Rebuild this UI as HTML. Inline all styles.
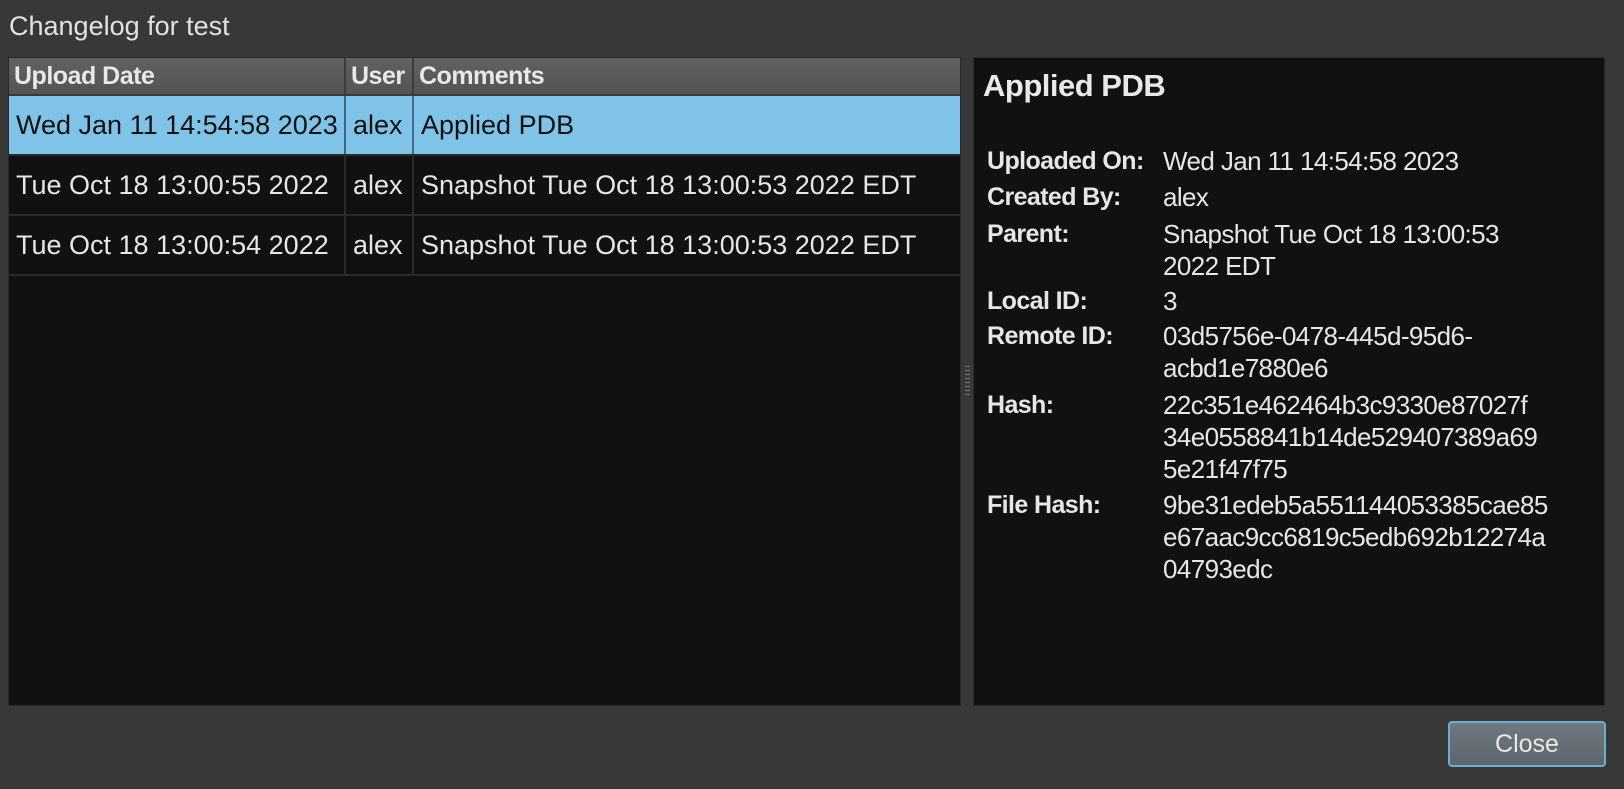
<!DOCTYPE html>
<html><head><meta charset="utf-8"><style>
*{margin:0;padding:0;box-sizing:border-box}
body{width:1624px;height:789px;background:#383838;font-family:"Liberation Sans",sans-serif;color:#e6e6e6;position:relative;overflow:hidden}
.title{position:absolute;left:9px;top:11px;font-size:27px;color:#e2e2e2}
.left{position:absolute;left:8px;top:57px;width:953px;height:649px;background:#111;border:1px solid #2a2a2a}
.hdr{position:absolute;left:0;top:0;width:100%;height:38px;background:linear-gradient(#616161,#545454);border-bottom:2px solid #3a3a3a}
.hdr div{position:absolute;top:0;height:36px;line-height:36px;font-weight:bold;font-size:25px;color:#e8e8e8;padding-left:5px;border-right:2px solid #3c3c3c;white-space:nowrap;overflow:hidden;letter-spacing:-0.5px}
.row{position:absolute;left:0;width:951px;height:60px;border-bottom:2px solid #2b2b2b}
.row div{position:absolute;top:0;height:58px;line-height:58px;font-size:27px;padding-left:7px;border-right:2px solid #2b2b2b;white-space:nowrap;letter-spacing:0}
.sel{background:#7fc4e8;color:#111}
.sel div{border-right-color:#3f6a86}
.right{position:absolute;left:973px;top:57px;width:632px;height:649px;background:#111;border:1px solid #2a2a2a}
.h{position:absolute;left:9px;top:10px;font-size:31px;font-weight:bold;color:#e8e8e8;letter-spacing:-0.5px}
.l{position:absolute;left:13px;font-size:25px;font-weight:bold;line-height:32px;letter-spacing:-0.6px}
.v{position:absolute;left:189px;font-size:26px;line-height:32px;letter-spacing:-0.6px}
.btn{position:absolute;left:1448px;top:721px;width:158px;height:46px;border:2px solid #6aaed6;border-radius:4px;background:linear-gradient(#707880,#5e666d);text-align:center;line-height:42px;font-size:25px;color:#e8e8e8}
.dots{position:absolute;left:965px;top:366px;width:5px;height:30px;background:repeating-linear-gradient(#777 0 1px,transparent 1px 4px)}
</style></head><body>
<div class="title">Changelog for test</div>
<div class="left">
 <div class="hdr">
  <div style="left:0;width:337px">Upload Date</div>
  <div style="left:337px;width:68px">User</div>
  <div style="left:405px;width:546px;border:none">Comments</div>
 </div>
 <div class="row sel" style="top:38px">
  <div style="left:0;width:337px">Wed Jan 11 14:54:58 2023</div>
  <div style="left:337px;width:68px">alex</div>
  <div style="left:405px;border:none">Applied PDB</div>
 </div>
 <div class="row" style="top:98px">
  <div style="left:0;width:337px">Tue Oct 18 13:00:55 2022</div>
  <div style="left:337px;width:68px">alex</div>
  <div style="left:405px;border:none">Snapshot Tue Oct 18 13:00:53 2022 EDT</div>
 </div>
 <div class="row" style="top:158px">
  <div style="left:0;width:337px">Tue Oct 18 13:00:54 2022</div>
  <div style="left:337px;width:68px">alex</div>
  <div style="left:405px;border:none">Snapshot Tue Oct 18 13:00:53 2022 EDT</div>
 </div>
</div>
<div class="dots"></div>
<div class="right">
 <div class="h">Applied PDB</div>
 <div class="l" style="top:87px">Uploaded On:</div><div class="v" style="top:87px">Wed Jan 11 14:54:58 2023</div>
 <div class="l" style="top:123px">Created By:</div><div class="v" style="top:123px">alex</div>
 <div class="l" style="top:160px">Parent:</div><div class="v" style="top:160px">Snapshot Tue Oct 18 13:00:53<br>2022 EDT</div>
 <div class="l" style="top:227px">Local ID:</div><div class="v" style="top:227px">3</div>
 <div class="l" style="top:262px">Remote ID:</div><div class="v" style="top:262px">03d5756e-0478-445d-95d6-<br>acbd1e7880e6</div>
 <div class="l" style="top:331px">Hash:</div><div class="v" style="top:331px">22c351e462464b3c9330e87027f<br>34e0558841b14de529407389a69<br>5e21f47f75</div>
 <div class="l" style="top:431px">File Hash:</div><div class="v" style="top:431px">9be31edeb5a551144053385cae85<br>e67aac9cc6819c5edb692b12274a<br>04793edc</div>
</div>
<div class="btn">Close</div>
</body></html>
